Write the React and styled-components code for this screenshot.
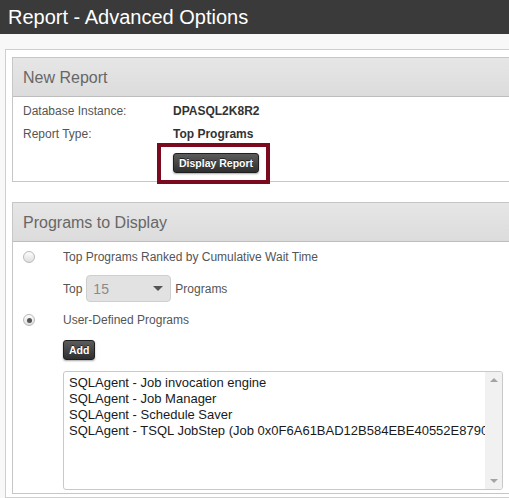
import React from "react"
import styled, { createGlobalStyle } from "styled-components"

const GlobalStyle = createGlobalStyle`
  html, body {
    margin: 0;
    padding: 0;
    background: #f8f8f8;
    overflow: hidden;
    font-family: "Liberation Sans", Arial, sans-serif;
  }
`

const TitleBar = styled.div`
  height: 34px;
  line-height: 34px;
  background: #3a3a3a;
  color: #fff;
  font-size: 20px;
  padding-left: 8px;
  white-space: nowrap;
`

const Page = styled.div`
  padding: 15px 0 0 5px;
`

const Outer = styled.div`
  width: 700px;
  background: #fff;
  border: 1px solid #cfcfcf;
  padding: 7px 0 3px 6px;
`

const Panel = styled.div`
  border: 1px solid #c6c6c6;
  background: #fff;
  margin-bottom: ${p => p.$gap || 0}px;
`

const PanelHead = styled.div`
  height: 38px;
  line-height: 39px;
  padding-left: 10px;
  font-size: 16px;
  color: #676767;
  background: linear-gradient(#e6e6e6, #dcdcdc);
  border-bottom: 1px solid #bdbdbd;
`

const InfoBody = styled.div`
  padding: 3px 10px 8px;
  font-size: 12px;
`

const InfoRow = styled.div`
  display: flex;
  line-height: 23px;
`

const Label = styled.span`
  width: 150px;
  color: #555;
`

const Value = styled.span`
  color: #333;
  font-weight: bold;
`

const ButtonSlot = styled.div`
  margin: 7px 0 0 150px;
  position: relative;
  width: max-content;
`

const Highlight = styled.div`
  position: absolute;
  top: -10px;
  left: -16px;
  right: -11px;
  bottom: -11px;
  border: 4px solid #7b0a1f;
  pointer-events: none;
`

const DarkButton = styled.button`
  display: block;
  height: 20px;
  padding: 0 ${p => p.$pad || 5}px;
  border: 1px solid #1f1f1f;
  border-radius: 3px;
  background: linear-gradient(#5c5c5c, #2f2f2f);
  color: #fff;
  font-family: "Liberation Sans", Arial, sans-serif;
  font-size: 10.5px;
  font-weight: bold;
  text-shadow: 0 -1px 0 rgba(0, 0, 0, 0.6);
  box-shadow: 0 1px 2px rgba(0, 0, 0, 0.35);
`

const ProgBody = styled.div`
  padding: 5px 10px 3px;
  font-size: 12px;
  color: #555;
`

const RadioRow = styled.div`
  display: flex;
  align-items: center;
  height: 20px;
  margin-top: ${p => p.$top || 0}px;
`

const Radio = styled.span`
  width: 12px;
  height: 12px;
  border-radius: 50%;
  border: 1px solid #b9b9b9;
  box-sizing: border-box;
  background: linear-gradient(#fdfdfd, #dedede);
  margin: 0 28px 0 0;
  display: grid;
  place-items: center;
  &::after {
    content: "";
    width: 5px;
    height: 5px;
    border-radius: 50%;
    background: ${p => (p.$checked ? "#555" : "transparent")};
  }
`

const Indented = styled.div`
  margin: ${p => p.$top || 0}px 0 0 40px;
  display: flex;
  align-items: center;
  gap: 4px;
`

const Select = styled.div`
  width: 85px;
  height: 27px;
  box-sizing: border-box;
  border: 1px solid #cfcfcf;
  border-radius: 4px;
  background: #e2e2e2;
  display: flex;
  align-items: center;
  justify-content: space-between;
  padding: 0 7px 0 6px;
  font-size: 14px;
  color: #8a8a8a;
`

const Caret = styled.span`
  width: 0;
  height: 0;
  border-left: 5px solid transparent;
  border-right: 5px solid transparent;
  border-top: 5px solid #555;
`

const ListBox = styled.div`
  margin: 11px 0 0 40px;
  width: 440px;
  height: 119px;
  box-sizing: border-box;
  border: 1px solid #c9c9c9;
  border-radius: 3px;
  display: flex;
  overflow: hidden;
`

const ListText = styled.div`
  flex: 1;
  overflow: hidden;
  white-space: nowrap;
  padding: 3px 0 0 5px;
  font-size: 13px;
  line-height: 16px;
  color: #1a1a1a;
`

const Scrollbar = styled.div`
  width: 17px;
  background: #f1f1f1;
  display: flex;
  flex-direction: column;
  justify-content: space-between;
  align-items: center;
  padding: 6px 0;
`

const Arrow = styled.span`
  width: 0;
  height: 0;
  border-left: 4px solid transparent;
  border-right: 4px solid transparent;
  ${p => (p.$up ? "border-bottom" : "border-top")}: 4px solid #a3a3a3;
`

const programs = [
  "SQLAgent - Job invocation engine",
  "SQLAgent - Job Manager",
  "SQLAgent - Schedule Saver",
  "SQLAgent - TSQL JobStep (Job 0x0F6A61BAD12B584EBE40552E8790C5A1 : Step 1)",
]

export default function App() {
  return (
    <>
      <GlobalStyle />
      <TitleBar>Report - Advanced Options</TitleBar>
      <Page>
        <Outer>
          <Panel $gap={20}>
            <PanelHead>New Report</PanelHead>
            <InfoBody>
              <InfoRow>
                <Label>Database Instance:</Label>
                <Value>DPASQL2K8R2</Value>
              </InfoRow>
              <InfoRow>
                <Label>Report Type:</Label>
                <Value>Top Programs</Value>
              </InfoRow>
              <ButtonSlot>
                <DarkButton>Display Report</DarkButton>
                <Highlight />
              </ButtonSlot>
            </InfoBody>
          </Panel>

          <Panel>
            <PanelHead>Programs to Display</PanelHead>
            <ProgBody>
              <RadioRow>
                <Radio />
                Top Programs Ranked by Cumulative Wait Time
              </RadioRow>
              <Indented $top={8}>
                Top
                <Select>
                  15
                  <Caret />
                </Select>
                Programs
              </Indented>
              <RadioRow $top={8}>
                <Radio $checked />
                User-Defined Programs
              </RadioRow>
              <Indented $top={10}>
                <DarkButton>Add</DarkButton>
              </Indented>
              <ListBox>
                <ListText>
                  {programs.map(p => (
                    <div key={p}>{p}</div>
                  ))}
                </ListText>
                <Scrollbar>
                  <Arrow $up />
                  <Arrow />
                </Scrollbar>
              </ListBox>
            </ProgBody>
          </Panel>
        </Outer>
      </Page>
    </>
  )
}
